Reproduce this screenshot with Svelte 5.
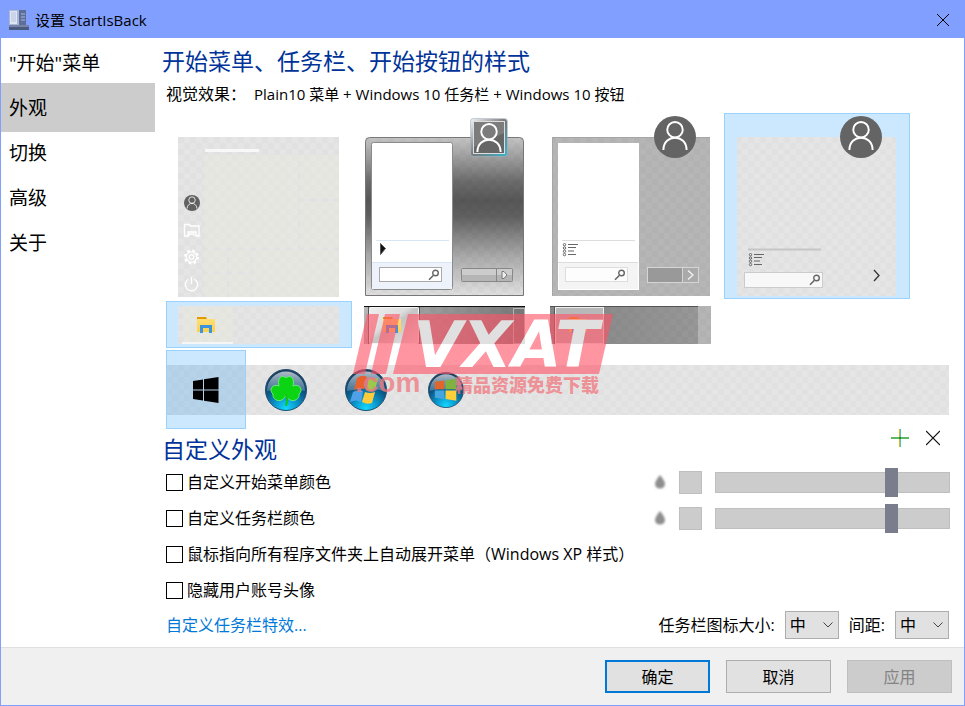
<script>
    const tabs = ['"开始"菜单', '外观', '切换', '高级', '关于'];
    const sizes = ['小', '中', '大'];
    const colorOptions = [
        { id: 'menu-color', label: '自定义开始菜单颜色' },
        { id: 'taskbar-color', label: '自定义任务栏颜色' }
    ];
    const options = [
        { id: 'hover-expand', label: '鼠标指向所有程序文件夹上自动展开菜单（Windows XP 样式）' },
        { id: 'hide-avatar', label: '隐藏用户账号头像' }
    ];

    let activeTab = 1;
    let menuStyle = 3;
    let taskbarStyle = 0;
    let orb = 0;
    let iconSize = '中';
    let iconGap = '中';
    let opacity = [77, 77];
    let checked = {};
</script>

<svg class="defs" width="0" height="0" aria-hidden="true">
    <defs>
        <pattern id="checker" width="12" height="12" patternUnits="userSpaceOnUse">
            <rect width="12" height="12" fill="#e5e5e5" />
            <path d="M0 0h6v6h-6zM6 6h6v6h-6z" fill="#e1e1e1" />
        </pattern>
        <pattern id="shade" width="12" height="12" patternUnits="userSpaceOnUse">
            <path d="M0 0h6v6h-6zM6 6h6v6h-6z" fill="#000" opacity=".025" />
        </pattern>
        <linearGradient id="aero" x2="0" y2="1">
            <stop offset="0" stop-color="#c4c4c4" />
            <stop offset=".12" stop-color="#a0a0a0" />
            <stop offset=".28" stop-color="#6b6b6b" />
            <stop offset=".4" stop-color="#575757" />
            <stop offset=".5" stop-color="#606060" />
            <stop offset=".75" stop-color="#a9a9a9" />
            <stop offset="1" stop-color="#e0e0e0" />
        </linearGradient>
        <linearGradient id="bar" x2="1" y2="0">
            <stop offset="0" stop-color="#b5b5b5" />
            <stop offset=".4" stop-color="#9c9c9c" />
            <stop offset="1" stop-color="#777" />
        </linearGradient>
        <linearGradient id="flatbar" x2="1" y2="0">
            <stop offset="0" stop-color="#858585" />
            <stop offset="1" stop-color="#999" />
        </linearGradient>
        <linearGradient id="glass" x2="1" y2="1">
            <stop offset="0" stop-color="#eee" />
            <stop offset=".4" stop-color="#ddd" />
            <stop offset=".5" stop-color="#c4c4c4" />
            <stop offset="1" stop-color="#e8e8e8" />
        </linearGradient>
        <linearGradient id="folder" x2="0" y2="1">
            <stop offset="0" stop-color="#ffdf76" />
            <stop offset="1" stop-color="#ffcf48" />
        </linearGradient>
        <radialGradient id="orb" cx=".5" cy=".95" r=".9">
            <stop offset="0" stop-color="#14d8ff" />
            <stop offset=".3" stop-color="#0a9ad0" />
            <stop offset=".65" stop-color="#0b5380" />
            <stop offset="1" stop-color="#1c3e5c" />
        </radialGradient>
        <linearGradient id="shine" x2="0" y2="1">
            <stop offset="0" stop-color="#fff" stop-opacity=".65" />
            <stop offset="1" stop-color="#bcd" stop-opacity=".3" />
        </linearGradient>
        <linearGradient id="frame" x2="1" y2="1">
            <stop offset="0" stop-color="#f2f2f2" />
            <stop offset=".5" stop-color="#777" />
            <stop offset="1" stop-color="#35b5cc" />
        </linearGradient>
        <symbol id="person" viewBox="0 0 28 32">
            <circle cx="14" cy="10" r="8" fill="none" stroke="#fff" stroke-width="2" />
            <path d="M2 31c0-17 24-17 24 0" fill="none" stroke="#fff" stroke-width="2" />
        </symbol>
        <symbol id="search" viewBox="0 0 12 12">
            <circle cx="7.5" cy="4" r="2.8" fill="none" stroke="#666" stroke-width="1.4" />
            <path d="M5.5 6.2L1 10.8" stroke="#666" stroke-width="1.6" />
        </symbol>
        <symbol id="list" viewBox="0 0 16 14">
            <g fill="none" stroke="#666">
                <path d="M6 1.5h10M6 4.5h8M6 8h6M6 11.500h8" />
                <circle cx="2.500" cy="1.700" r="1.200" />
                <circle cx="2.500" cy="5" r="1.200" />
                <circle cx="2.500" cy="8.300" r="1.200" />
                <circle cx="2.500" cy="11.600" r="1.200" />
            </g>
        </symbol>
        <symbol id="explorer" viewBox="0 0 20 17">
            <path d="M1 1h9l1 2h-10z" fill="#e39a00" />
            <path d="M1 3h18v13h-18z" fill="url(#folder)" />
            <path d="M4 17v-8h12v8h-3v-5h-6v5z" fill="#3a95dc" />
        </symbol>
    </defs>
</svg>

<div class="window">
    <header>
        <svg width="20" height="20" viewBox="0 0 20 20" aria-hidden="true">
            <path d="M10 0h7v15h-7z" fill="#5d6f98" />
            <path d="M0 0h10v15h-10z" fill="#aab6d3" />
            <path d="M1 1h7v13h-7z" fill="#dfe6f5" />
            <path d="M2 3h5M2 5h5M2 7h5M2 9h5M2 11h5" stroke="#b6c2dd" />
            <path d="M12 4h4M12 7h4M12 10h4" stroke="#a9b9dc" />
            <path d="M0 15h20v5h-20z" fill="#4d5a80" />
            <path d="M0 15h20v2h-20z" fill="#7584a8" />
        </svg>
        <span>设置 StartIsBack</span>
        <button class="icon-button" aria-label="关闭">
            <svg width="14" height="14" viewBox="0 0 14 14"><path d="M1 1l12 12M13 1L1 13" stroke="#000" /></svg>
        </button>
    </header>

    <div class="body">
        <nav>
            {#each tabs as tab, i}
                <button class:active={activeTab === i} on:click={() => (activeTab = i)}>{tab}</button>
            {/each}
        </nav>

        <main>
            <h1>开始菜单、任务栏、开始按钮的样式</h1>
            <p><span>视觉效果：</span><span class="current">Plain10 菜单 + Windows 10 任务栏 + Windows 10 按钮</span></p>

            <div class="gallery">
                <div class="tiles">
                    <button class="tile" class:selected={menuStyle === 0} aria-label="Windows 10" on:click={() => (menuStyle = 0)}>
                        <svg width="186" height="186" viewBox="0 0 186 186">
                            <path d="M12 24h161v160h-161z" fill="url(#checker)" />
                            <path d="M39 42h93v93h-93zM134 42h39v44h-39zM134 88h39v47h-39zM39 137h22v22h-22zM63 137h21v22h-21zM39 161h22v23h-22zM63 161h21v23h-21zM87 137h86v47h-86z" fill="#eaeade" opacity=".4" />
                            <path d="M39 36h54v3h-54z" fill="#f8f8f8" />
                            <circle cx="26" cy="90" r="8" fill="#606060" />
                            <use href="#person" x="20" y="83" width="12" height="13" />
                            <g fill="none" stroke="#fff" stroke-width="1.300">
                                <path d="M18.500 123v-11.500h5l1 1.500h8.500v10h-3v-4h-8v4z" />
                                <path d="M23 123v-2h5v2" />
                                <circle cx="25.500" cy="144" r="2.300" />
                                <circle cx="25.500" cy="144" r="5.200" />
                                <circle cx="25.500" cy="144" r="6.500" stroke-width="2" stroke-dasharray="2.600 2.500" />
                                <path d="M22.500 166.300a6.200 6.200 0 1 0 6 0M25.500 164v7" />
                            </g>
                        </svg>
                    </button>
                    <button class="tile" class:selected={menuStyle === 1} aria-label="Windows 7" on:click={() => (menuStyle = 1)}>
                        <svg width="186" height="186" viewBox="0 0 186 186">
                            <path d="M13.500 182.500v-154q0-4 4-4h150q4 0 4 4v154z" fill="url(#aero)" stroke="#777" />
                            <path d="M15 26h156v156h-156z" fill="url(#shade)" />
                            <rect x="19.500" y="29.500" width="81" height="147" rx="2" fill="#fff" stroke="#8b8b8b" />
                            <path d="M20 150h80v26h-80z" fill="#eef3fb" />
                            <path d="M24 127.500h73M20 149.500h80" stroke="#d8e5f2" />
                            <path d="M28.500 130.500l5 5-5 6z" fill="#111" stroke="#555" />
                            <rect x="27.500" y="154.500" width="62" height="14" fill="#fff" stroke="#aaa" />
                            <use href="#search" x="76" y="156" width="12" height="12" />
                            <rect x="109.500" y="155.500" width="51" height="13" rx="1" fill="#b5b5b5" stroke="#888" />
                            <path d="M110 156h50v6h-50z" fill="#ccc" />
                            <path d="M144.500 155v14" stroke="#888" />
                            <path d="M150 158.500h2l3 3.500-3 3.500h-2z" fill="#eee" stroke="#777" />
                            <rect x="118" y="5" width="38" height="39" rx="4" fill="#9ab" opacity=".6" />
                            <rect x="119" y="6" width="36" height="37" rx="3" fill="url(#frame)" />
                            <rect x="121.500" y="8.500" width="31" height="32" fill="#666" stroke="#ddd" />
                            <path d="M122 9h30v11l-30 14z" fill="#fff" opacity=".15" />
                            <use href="#person" x="123" y="9" width="28" height="31" />
                        </svg>
                    </button>
                    <button class="tile" class:selected={menuStyle === 2} aria-label="Plain8" on:click={() => (menuStyle = 2)}>
                        <svg width="186" height="186" viewBox="0 0 186 186">
                            <path d="M14 24h158v159h-158z" fill="#b6b6b6" />
                            <path d="M14 24h158v159h-158z" fill="url(#shade)" />
                            <path d="M14 24.500h158M14.500 24v159" stroke="#a6a6a6" />
                            <path d="M20 30h81v147h-81z" fill="#fff" />
                            <path d="M21 149h79v27h-79z" fill="#f4f4f4" />
                            <path d="M24 127.500h73M20 149.500h80" stroke="#ddd" />
                            <use href="#list" x="24" y="130" width="16" height="14" />
                            <rect x="27.500" y="154.500" width="62" height="14" fill="#fdfdfd" stroke="#ddd" />
                            <use href="#search" x="76" y="156" width="12" height="12" />
                            <rect x="109.500" y="154.500" width="51" height="15" fill="#999" stroke="#d5d5d5" />
                            <path d="M145 155h15v14h-15z" fill="#aaa" />
                            <path d="M144.500 155v14" stroke="#d5d5d5" />
                            <path d="M150 157.500l5 4.500-5 4.500" fill="none" stroke="#f3f3f3" stroke-width="1.300" />
                            <circle cx="137" cy="24" r="21" fill="#646464" />
                            <use href="#person" x="122" y="7" width="30" height="31" />
                        </svg>
                    </button>
                    <button class="tile" class:selected={menuStyle === 3} aria-label="Plain10" on:click={() => (menuStyle = 3)}>
                        <svg width="186" height="186" viewBox="0 0 186 186">
                            <path d="M13 24h159v159h-159z" fill="url(#checker)" />
                            <path d="M24 136.500h73" stroke="#c6c6c6" stroke-width="2" />
                            <use href="#list" x="24" y="140" width="16" height="14" />
                            <rect x="20.500" y="159.500" width="78" height="15" fill="#f8f8f8" stroke="#ccc" />
                            <use href="#search" x="85" y="161" width="12" height="12" />
                            <path d="M150 157l5 5.500-5 5.500" fill="none" stroke="#333" stroke-width="1.300" />
                            <circle cx="137" cy="24" r="21" fill="#646464" />
                            <use href="#person" x="122" y="7" width="30" height="31" />
                        </svg>
                    </button>
                </div>

                <div class="tiles">
                    <button class="tile" class:selected={taskbarStyle === 0} aria-label="Windows 10 任务栏" on:click={() => (taskbarStyle = 0)}>
                        <svg width="186" height="47" viewBox="0 0 186 47">
                            <path d="M12 5h161v38h-161z" fill="url(#checker)" />
                            <path d="M17 5h50v36h-50z" fill="#eaeade" opacity=".5" />
                            <path d="M16 42h51" stroke="#f6f6f6" stroke-width="2" />
                            <use href="#explorer" x="30" y="15" width="20" height="17" />
                        </svg>
                    </button>
                    <button class="tile" class:selected={taskbarStyle === 1} aria-label="Windows 7 任务栏" on:click={() => (taskbarStyle = 1)}>
                        <svg width="186" height="47" viewBox="0 0 186 47">
                            <path d="M12 5h161v38h-161z" fill="url(#bar)" />
                            <path d="M12 5h161v38h-161z" fill="url(#shade)" />
                            <path d="M12 5.500h161" stroke="#111" />
                            <rect x="17.500" y="6.500" width="49" height="36" rx="1" fill="url(#glass)" stroke="#f4f4f4" />
                            <path d="M16.500 6v37M67.500 6v37" stroke="#555" />
                            <rect x="161.500" y="7.500" width="11" height="35" fill="none" stroke="#b5b5b5" />
                            <use href="#explorer" x="30" y="15" width="20" height="17" />
                        </svg>
                    </button>
                    <button class="tile" class:selected={taskbarStyle === 2} aria-label="Windows 8 任务栏" on:click={() => (taskbarStyle = 2)}>
                        <svg width="186" height="47" viewBox="0 0 186 47">
                            <path d="M12 5h161v38h-161z" fill="url(#flatbar)" />
                            <path d="M160 5h13v38h-13z" fill="#b5b5b5" />
                            <path d="M12 5h161v38h-161z" fill="url(#shade)" />
                            <path d="M12 5.500h148M16.500 6v37" stroke="#555" />
                            <rect x="17.500" y="6.500" width="48" height="36" fill="#b8b8b8" stroke="#f0f0f0" />
                            <use href="#explorer" x="30" y="15" width="20" height="17" />
                        </svg>
                    </button>
                </div>

                <div class="orbs">
                    <button class="orb" class:selected={orb === 0} aria-label="Windows 10 按钮" on:click={() => (orb = 0)}>
                        <svg width="26" height="26" viewBox="0 0 26 26">
                            <path d="M0 4l10-1.500v10h-10zM11 2.300L25.500 0v12.500h-14.500zM0 13.500h10v10l-10-1.500zM11 13.500h14.500v12.500l-14.500-2.300z" />
                        </svg>
                    </button>
                    <button class="orb" class:selected={orb === 1} aria-label="三叶草按钮" on:click={() => (orb = 1)}>
                        <svg width="42" height="42" viewBox="0 0 42 42">
                            <circle cx="21" cy="21" r="20.500" fill="url(#orb)" stroke="#244e6e" />
                            <path d="M2 22a19 19.500 0 0 1 38 0q-19-5-38 0z" fill="url(#shine)" />
                            <path d="M21 26c-3 9-14 6-13-1-5-4 0-11 6-8-2-8 3-12 7-8 4-4 9 0 7 8 6-3 11 4 6 8 1 7-10 10-13 1z" fill="#0bd512" stroke="#6fe87c" />
                            <path d="M21 25q2 6 0 12" fill="none" stroke="#13c313" stroke-width="2" />
                        </svg>
                    </button>
                    <button class="orb" class:selected={orb === 2} aria-label="Windows 7 按钮" on:click={() => (orb = 2)}>
                        <svg width="42" height="42" viewBox="0 0 42 42">
                            <circle cx="21" cy="21" r="20.500" fill="url(#orb)" stroke="#244e6e" />
                            <path d="M2 22a19 19.500 0 0 1 38 0q-19-5-38 0z" fill="url(#shine)" />
                            <path d="M12 9q6-4 10-1l-3 12q-5-2-10 1z" fill="#e8622e" />
                            <path d="M24 9q4 2 9 0l-3 12q-4 2-9 0z" fill="#9bc94c" />
                            <path d="M8 23q5-3 10-1l-2 11q-5-3-11 0z" fill="#4ea1e6" />
                            <path d="M20 23q5 2 10 0l-3 11q-5 2-10-1z" fill="#ffcb3a" />
                        </svg>
                    </button>
                    <button class="orb" class:selected={orb === 3} aria-label="Windows 8 按钮" on:click={() => (orb = 3)}>
                        <svg width="36" height="36" viewBox="0 0 42 42">
                            <circle cx="21" cy="21" r="20.500" fill="url(#orb)" stroke="#244e6e" />
                            <path d="M2 22a19 19.500 0 0 1 38 0q-19-5-38 0z" fill="url(#shine)" />
                            <path d="M8 11.500l11-1.500v10h-11z" fill="#e0662c" />
                            <path d="M20.500 10l12.500-2v12h-12.500z" fill="#7fb23f" />
                            <path d="M8 21.500h11v10l-11-1.500z" fill="#45a5e0" />
                            <path d="M20.500 21.500h12.500v12l-12.500-2z" fill="#ffcf3a" />
                        </svg>
                    </button>
                </div>

                <svg class="stamp" width="264" height="90" viewBox="0 0 264 90">
                    <defs>
                        <pattern id="letters" width="264" height="90" patternUnits="userSpaceOnUse">
                            <rect width="264" height="90" fill="#fff" />
                            <path d="M0 0h173v34h-173zM199 0h65v34h-65z" fill="#e0e0e0" />
                        </pattern>
                    </defs>
                    <path d="M15 4h12l-14 60h-12zM33 4h15l-14 60h-15zM56 4h205l-14 60h-206z" fill="#ff5468" opacity=".62" />
                    <text class="brand" x="61" y="57" fill="url(#letters)">VXAT</text>
                    <text class="domain" x="3" y="82">.com</text>
                    <text class="slogan" x="103" y="82">精品资源免费下载</text>
                </svg>
            </div>

            <div class="section-head">
                <h2>自定义外观</h2>
                <button class="icon-button" aria-label="添加">
                    <svg width="18" height="18" viewBox="0 0 18 18"><path d="M0 9h18" stroke="#5fb760" stroke-width="2" /><path d="M8.500 0v18" stroke="#d9b92b" /><path d="M9.500 0v18" stroke="#4fc0c4" /><path d="M8 9h2" stroke="#1f9030" stroke-width="2" /></svg>
                </button>
                <button class="icon-button" aria-label="删除">
                    <svg width="14" height="18" viewBox="0 0 14 18"><path d="M0 2l14 14M14 2L0 16" stroke="#111" stroke-width="1.200" /></svg>
                </button>
            </div>

            {#each colorOptions as option, i}
                <div class="row">
                    <input type="checkbox" id={option.id} bind:checked={checked[option.id]} />
                    <label for={option.id}>{option.label}</label>
                    <div class="color-tools">
                        <svg class="drop" width="12" height="15" viewBox="0 0 12 15" aria-hidden="true">
                            <path d="M6 0q5 6 5 9a5 4.500 0 0 1-10 0q0-3 5-9z" fill="#8e8e8e" />
                        </svg>
                        <button class="swatch" aria-label="选择颜色"></button>
                        <input type="range" aria-label="{option.label} 不透明度" bind:value={opacity[i]} />
                    </div>
                </div>
            {/each}
            {#each options as option}
                <div class="row">
                    <input type="checkbox" id={option.id} bind:checked={checked[option.id]} />
                    <label for={option.id}>{option.label}</label>
                </div>
            {/each}

            <div class="bottom">
                <a href="#effects">自定义任务栏特效...</a>
                <label for="icon-size">任务栏图标大小:</label>
                <select id="icon-size" bind:value={iconSize}>
                    {#each sizes as size}<option>{size}</option>{/each}
                </select>
                <label for="icon-gap">间距:</label>
                <select id="icon-gap" bind:value={iconGap}>
                    {#each sizes as size}<option>{size}</option>{/each}
                </select>
            </div>
        </main>
    </div>

    <footer>
        <button class="primary">确定</button>
        <button>取消</button>
        <button disabled>应用</button>
    </footer>
</div>

<style>
:global(body){
    background: #fff;
}
.defs{
    position: absolute;
}
.window{
    display: flex;
    flex-direction: column;
    min-height: 100vh;
    box-sizing: border-box;
    border: 1px solid #809fff;
    font-family: "Open Sans", "Noto Sans CJK SC", sans-serif;
    font-size: 16px;
    line-height: 22px;
    color: #000;
}
button, select{
    font: inherit;
    color: inherit;
}
svg{
    display: block;
}
header{
    display: flex;
    align-items: center;
    gap: 6px;
    height: 37px;
    padding: 0 14px 0 8px;
    background: #809fff;
    font-size: 15px;
}
header .icon-button{
    margin-left: auto;
}
.icon-button{
    padding: 0;
    border: none;
    background: none;
}
.body{
    display: flex;
    flex: 1;
}
nav{
    flex: none;
    width: 154px;
}
nav button{
    display: block;
    width: 100%;
    height: 49px;
    margin-bottom: -4px;
    padding: 0 8px;
    border: none;
    background: none;
    font-size: 19px;
    text-align: left;
}
nav button.active{
    background: #ccc;
}
main{
    flex: 1;
    min-width: 0;
    padding: 8px 14px 5px 11px;
}
h1, h2{
    margin: 0 0 0 -4px;
    font-size: 23px;
    font-weight: normal;
    line-height: 30px;
    color: #039;
}
p{
    display: flex;
    gap: 8px;
    margin: 7px 0 8px;
}
.current{
    font-size: 15px;
}
.gallery{
    position: relative;
    display: flex;
    flex-direction: column;
    gap: 2px;
}
.tiles, .orbs{
    display: flex;
}
.tile, .orb{
    flex: none;
    padding: 0;
    border: none;
    background: none;
}
.tile.selected, .orb.selected{
    background: rgba(0, 140, 255, 0.2);
    outline: 1px solid #99d1ff;
    outline-offset: -1px;
}
.orbs{
    position: relative;
}
.orbs::before{
    content: "";
    position: absolute;
    inset: 15px 1px 14px 0;
    background: conic-gradient(#e5e5e5 25%, #e1e1e1 0 50%, #e5e5e5 0 75%, #e1e1e1 0) 0 0 / 12px 12px;
}
.orb{
    position: relative;
    display: flex;
    align-items: center;
    justify-content: center;
    width: 80px;
    height: 79px;
}
.stamp{
    position: absolute;
    top: 197px;
    left: 186px;
    pointer-events: none;
}
.brand{
    font: italic bold 64px "DejaVu Sans", sans-serif;
}
.domain, .slogan{
    font: bold 28px "Liberation Sans", sans-serif;
    fill: #f0787f;
    fill-opacity: 0.75;
}
.slogan{
    font: 900 18px "Noto Sans CJK SC", sans-serif;
}
.section-head{
    display: flex;
    align-items: flex-start;
    gap: 17px;
    padding-right: 10px;
}
.section-head h2{
    flex: 1;
    padding-top: 5px;
}
.row{
    display: flex;
    align-items: center;
    gap: 4px;
    height: 36px;
}
input[type="checkbox"]{
    appearance: none;
    width: 17px;
    height: 17px;
    margin: 0;
    border: 1px solid #000;
    background: #fff;
}
input[type="checkbox"]:checked{
    box-shadow: inset 0 0 0 3px #fff;
    background: #0078d7;
}
.color-tools{
    display: flex;
    align-items: center;
    gap: 13px;
    margin-left: auto;
}
.drop{
    filter: blur(1px);
}
.swatch{
    width: 23px;
    height: 23px;
    padding: 0;
    border: 1px solid #bfbfbf;
    background: #ccc;
}
input[type="range"]{
    appearance: none;
    width: 235px;
    height: 29px;
    margin: 0;
    background: none;
}
input[type="range"]::-webkit-slider-runnable-track{
    height: 21px;
    box-sizing: border-box;
    border: 1px solid #bfbfbf;
    background: #ccc;
}
input[type="range"]::-webkit-slider-thumb{
    appearance: none;
    width: 13px;
    height: 29px;
    margin-top: -5px;
    background: #7a7d8b;
}
.bottom{
    display: flex;
    align-items: center;
    gap: 10px;
    height: 34px;
    padding-right: 1px;
}
.bottom a{
    margin-right: auto;
    color: #0078d7;
    text-decoration: none;
}
select{
    appearance: none;
    width: 54px;
    height: 28px;
    padding: 0 4px;
    border: 1px solid #adadad;
    border-radius: 0;
    background: #e1e1e1 url("data:image/svg+xml,%3Csvg xmlns='http://www.w3.org/2000/svg' width='10' height='6'%3E%3Cpath d='M0.5 0.5l4.500 4.500 4.500-4.500' fill='none' stroke='%23444'/%3E%3C/svg%3E") no-repeat right 5px center;
}
footer{
    display: flex;
    justify-content: flex-end;
    gap: 16px;
    padding: 12px 12px;
    border-top: 1px solid #dfdfdf;
    background: #f0f0f0;
}
footer button{
    width: 105px;
    height: 33px;
    padding: 0;
    border: 1px solid #adadad;
    background: #e1e1e1;
}
footer .primary{
    border: 2px solid #0078d7;
}
footer button:disabled{
    border-color: #bfbfbf;
    background: #ccc;
    color: #838383;
}
</style>
